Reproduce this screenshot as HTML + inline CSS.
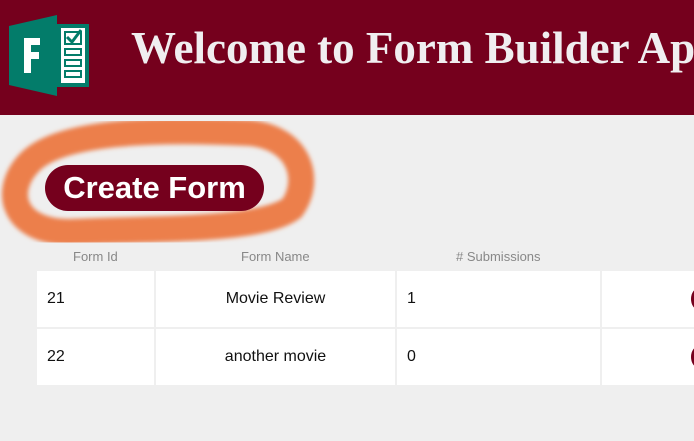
<!DOCTYPE html>
<html><head><style>
body{margin:0;width:694px;height:441px;overflow:hidden;background:#efefef;font-family:"Liberation Sans",sans-serif;position:relative}
.hdr{position:absolute;left:0;top:0;width:694px;height:115px;background:#75001d}
.title{position:absolute;left:131px;top:22px;font-family:"Liberation Serif",serif;font-weight:bold;font-size:45px;color:#f0eef0;white-space:nowrap}
.btn{position:absolute;left:45px;top:165px;width:219px;height:46px;border-radius:23px;background:#75001d;color:#fff;font-weight:bold;font-size:31px;line-height:46px;text-align:center}
.th{position:absolute;top:249px;font-size:13px;color:#888}
.cell{position:absolute;background:#fff;font-size:16px;color:#111;line-height:56px;height:56px}
.dot{position:absolute;width:16px;height:22px;border-radius:50%;background:#75001d;left:691px}
</style></head><body>
<div class="hdr"></div>
<svg style="position:absolute;left:9px;top:15px" width="82" height="82" viewBox="0 0 82 82">
<polygon points="0,11 48,0 48,81 0,70" fill="#037c6a"/>
<rect x="48" y="9" width="32" height="63" fill="#037c6a"/>
<rect x="52" y="13" width="24" height="55" fill="#fff"/>
<rect x="55" y="16" width="18" height="14" fill="#037c6a"/>
<rect x="57" y="18" width="14" height="10" fill="#fff"/>
<path d="M58 22 L63 27 L72 15" stroke="#037c6a" stroke-width="3" fill="none"/>
<rect x="55" y="33" width="18" height="8" fill="#037c6a"/><rect x="57" y="35" width="14" height="4" fill="#fff"/>
<rect x="55" y="44" width="18" height="8" fill="#037c6a"/><rect x="57" y="46" width="14" height="4" fill="#fff"/>
<rect x="55" y="55" width="18" height="8" fill="#037c6a"/><rect x="57" y="57" width="14" height="4" fill="#fff"/>
<path d="M15 23 h16 v7 h-9 v7 h8 v7 h-8 v14 h-7z" fill="#fff"/>
</svg>
<div class="title">Welcome to Form Builder App</div>
<svg style="position:absolute;left:0;top:120px" width="320" height="130"><defs><filter id="b"><feGaussianBlur stdDeviation="2"/></filter></defs>
<path d="M30 42 C60 12,150 8,250 13 C300 18,312 60,292 88 C260 112,150 108,70 112 C12 112,2 70,30 42 Z" fill="none" stroke="#ec7f4c" stroke-width="26" filter="url(#b)"/></svg>
<div class="btn">Create Form</div>
<div class="th" style="left:73px">Form Id</div>
<div class="th" style="left:241px">Form Name</div>
<div class="th" style="left:456px">&#35; Submissions</div>
<div class="cell" style="left:37px;top:271px;width:107px;padding-left:10px">21</div>
<div class="cell" style="left:156px;top:271px;width:239px;text-align:center">Movie Review</div>
<div class="cell" style="left:397px;top:271px;width:193px;padding-left:10px">1</div>
<div class="cell" style="left:602px;top:271px;width:92px"></div>
<div class="cell" style="left:37px;top:329px;width:107px;padding-left:10px">22</div>
<div class="cell" style="left:156px;top:329px;width:239px;text-align:center">another movie</div>
<div class="cell" style="left:397px;top:329px;width:193px;padding-left:10px">0</div>
<div class="cell" style="left:602px;top:329px;width:92px"></div>
<div class="dot" style="top:288px"></div>
<div class="dot" style="top:346px"></div>
</body></html>
